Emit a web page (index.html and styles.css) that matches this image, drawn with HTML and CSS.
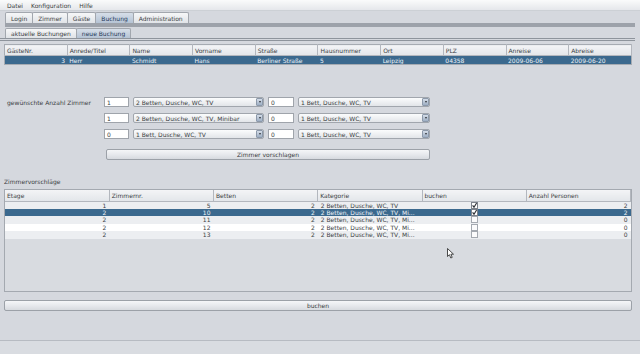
FILE: index.html
```html
<!DOCTYPE html>
<html lang="de">
<head>
    <meta charset="UTF-8">
    <title>Hotelverwaltung</title>
    <link rel="stylesheet" href="styles.css">
</head>
<body>
<div class="window">
    <div class="menubar">
        <span>Datei</span><span>Konfiguration</span><span>Hilfe</span>
    </div>

    <div class="tabs main-tabs">
        <span class="tab">Login</span>
        <span class="tab">Zimmer</span>
        <span class="tab">Gäste</span>
        <span class="tab active">Buchung</span>
        <span class="tab">Administration</span>
    </div>
    <div class="tab-bar"></div>

    <div class="tabs sub-tabs">
        <span class="tab">aktuelle Buchungen</span>
        <span class="tab active">neue Buchung</span>
    </div>
    <div class="sub-line"></div>

    <div class="content">
        <!-- Gast -->
        <table class="grid guest">
            <thead>
                <tr>
                    <th>GästeNr.</th><th>Anrede/Titel</th><th>Name</th><th>Vorname</th><th>Straße</th>
                    <th>Hausnummer</th><th>Ort</th><th>PLZ</th><th>Anreise</th><th>Abreise</th>
                </tr>
            </thead>
            <tbody>
                <tr class="sel">
                    <td class="num">3</td><td>Herr</td><td>Schmidt</td><td>Hans</td><td>Berliner Straße</td>
                    <td>5</td><td>Leipzig</td><td>04358</td><td>2009-06-06</td><td>2009-06-20</td>
                </tr>
            </tbody>
        </table>

        <!-- gewünschte Zimmer -->
        <div class="rooms-form">
            <span class="form-label">gewünschte Anzahl Zimmer</span>
            <span class="field">1</span>
            <span class="combo"><span class="value">2 Betten, Dusche, WC, TV</span><span class="arrow"></span></span>
            <span class="field">0</span>
            <span class="combo"><span class="value">1 Bett, Dusche, WC, TV</span><span class="arrow"></span></span>

            <span></span>
            <span class="field">1</span>
            <span class="combo"><span class="value">2 Betten, Dusche, WC, TV, Minibar</span><span class="arrow"></span></span>
            <span class="field">0</span>
            <span class="combo"><span class="value">1 Bett, Dusche, WC, TV</span><span class="arrow"></span></span>

            <span></span>
            <span class="field">0</span>
            <span class="combo"><span class="value">1 Bett, Dusche, WC, TV</span><span class="arrow"></span></span>
            <span class="field">0</span>
            <span class="combo"><span class="value">1 Bett, Dusche, WC, TV</span><span class="arrow"></span></span>

            <button class="btn suggest">Zimmer vorschlagen</button>
        </div>

        <div class="section-label">Zimmervorschläge</div>
        <div class="scrollpane">
            <table class="grid suggestions">
                <thead>
                    <tr>
                        <th>Etage</th><th>Zimmernr.</th><th>Betten</th><th>Kategorie</th><th>buchen</th><th>Anzahl Personen</th>
                    </tr>
                </thead>
                <tbody>
                    <tr>
                        <td class="num">1</td><td class="num">5</td><td class="num">2</td>
                        <td>2 Betten, Dusche, WC, TV</td>
                        <td class="check"><svg width="7" height="7" viewBox="0 0 7 7"><rect x="0.5" y="0.5" width="6" height="6" fill="#fff" stroke="#7d838c"/><path d="M1.6 3.4 L3 5.2 L5.6 1" fill="none" stroke="#2a2d33" stroke-width="1.1"/></svg></td>
                        <td class="num">2</td>
                    </tr>
                    <tr class="sel">
                        <td class="num">2</td><td class="num">10</td><td class="num">2</td>
                        <td>2 Betten, Dusche, WC, TV, Mi...</td>
                        <td class="check"><svg width="7" height="7" viewBox="0 0 7 7"><rect x="0.5" y="0.5" width="6" height="6" fill="#fff" stroke="#7d838c"/><path d="M1.6 3.4 L3 5.2 L5.6 1" fill="none" stroke="#2a2d33" stroke-width="1.1"/></svg></td>
                        <td class="num">2</td>
                    </tr>
                    <tr>
                        <td class="num">2</td><td class="num">11</td><td class="num">2</td>
                        <td>2 Betten, Dusche, WC, TV, Mi...</td>
                        <td class="check"><svg width="7" height="7" viewBox="0 0 7 7"><rect x="0.5" y="0.5" width="6" height="6" fill="#fbfbfc" stroke="#a4a9b0"/></svg></td>
                        <td class="num">0</td>
                    </tr>
                    <tr>
                        <td class="num">2</td><td class="num">12</td><td class="num">2</td>
                        <td>2 Betten, Dusche, WC, TV, Mi...</td>
                        <td class="check"><svg width="7" height="7" viewBox="0 0 7 7"><rect x="0.5" y="0.5" width="6" height="6" fill="#fbfbfc" stroke="#a4a9b0"/></svg></td>
                        <td class="num">0</td>
                    </tr>
                    <tr>
                        <td class="num">2</td><td class="num">13</td><td class="num">2</td>
                        <td>2 Betten, Dusche, WC, TV, Mi...</td>
                        <td class="check"><svg width="7" height="7" viewBox="0 0 7 7"><rect x="0.5" y="0.5" width="6" height="6" fill="#fbfbfc" stroke="#a4a9b0"/></svg></td>
                        <td class="num">0</td>
                    </tr>
                </tbody>
            </table>
        </div>

        <button class="btn book">buchen</button>
    </div>

    <div class="statusbar"></div>

    <!-- Mauszeiger -->
    <svg class="cursor" width="8" height="11" viewBox="0 0 8 11">
        <path d="M0.5 0.5 L0.5 8.5 L2.4 6.7 L3.8 10 L5.2 9.4 L3.9 6.2 L6.5 6.2 Z" fill="#fff" stroke="#222" stroke-width="0.8"/>
    </svg>
</div>
</body>
</html>
```

FILE: styles.css
```css
/* Allgemein */
* {
    box-sizing: border-box;
}

body {
    margin: 0;
    font-family: "DejaVu Sans", sans-serif;
    font-size: 6px;
    color: #3b3e43;
    background-color: #d5d8de;
}

.window {
    position: relative;
    width: 640px;
    height: 354px;
    overflow: hidden;
    display: flex;
    flex-direction: column;
    background-color: #d5d8de;
}

/* Menü */
.menubar {
    height: 11px;
    display: flex;
    align-items: center;
    padding-left: 3px;
    background: linear-gradient(#fafbfb, #e5e7eb);
    border-bottom: 1px solid #ccd0d5;
}

.menubar span {
    padding: 0 4px;
}

/* Reiter */
.tabs {
    display: flex;
    padding-left: 5px;
}

.main-tabs {
    margin-top: 1px;
    height: 11px;
}

.sub-tabs {
    margin-top: 1px;
    height: 10px;
}

.tab {
    display: flex;
    align-items: center;
    padding: 0 5px;
    margin-right: -1px;
    border: 1px solid #a2a7ae;
    border-bottom: none;
    border-radius: 2px 2px 0 0;
    background: linear-gradient(#f6f7f8, #e0e3e7);
}

.tab.active {
    background: linear-gradient(#d6dee8, #b5c3d4);
    color: #26395a;
}

.tab-bar {
    height: 4px;
    margin: 0 5px 0 5px;
    background-color: #9da2aa;
}

.sub-line {
    height: 3px;
    margin-right: 5px;
    border-top: 1px solid #8e949c;
    border-bottom: 1px solid #8e949c;
}

/* Inhalt */
.content {
    flex: 1;
    padding: 3px 8px 0 4px;
}

.grid {
    border-collapse: collapse;
    table-layout: fixed;
    width: 628px;
}

.grid th {
    height: 11px;
    padding: 0 2px;
    font-weight: normal;
    text-align: left;
    white-space: nowrap;
    overflow: hidden;
    background: linear-gradient(#f3f4f6, #e3e6ea);
    border-right: 1px solid #b3b7be;
    border-bottom: 1px solid #b3b7be;
}

.grid td {
    padding: 0 2px;
    white-space: nowrap;
    overflow: hidden;
}

.guest {
    border: 1px solid #a6abb2;
}

.guest td {
    height: 9px;
}

.grid tr.sel td {
    background-color: #3b698e;
    color: #eef3f8;
}

.num {
    text-align: right;
}

/* Formular */
.rooms-form {
    display: grid;
    grid-template-columns: 93px 25px 131px 26px 132px;
    grid-auto-rows: 10px;
    column-gap: 4px;
    row-gap: 6px;
    margin: 32px 0 0 3px;
}

.form-label {
    display: flex;
    align-items: center;
    white-space: nowrap;
}

.field {
    display: flex;
    align-items: center;
    padding-left: 2px;
    background-color: #ffffff;
    border: 1px solid #9fa4ab;
}

.combo {
    display: flex;
    align-items: center;
    padding-left: 2px;
    border: 1px solid #a1a6ad;
    border-radius: 2px;
    background: linear-gradient(#fbfcfd, #e2e5e9);
}

.combo .value {
    flex: 1;
    white-space: nowrap;
    overflow: hidden;
}

.combo .arrow {
    width: 7px;
    height: 8px;
    display: flex;
    align-items: center;
    justify-content: center;
    border: 1px solid #8c99aa;
    border-radius: 1px;
    background: linear-gradient(#d5dde8, #9daec3);
}

.combo .arrow::after {
    content: "";
    border-left: 1.5px solid transparent;
    border-right: 1.5px solid transparent;
    border-top: 2px solid #2c3036;
}

.btn {
    height: 11px;
    padding: 0;
    font: inherit;
    color: #3a3d42;
    border: 1px solid #9ca1a8;
    border-radius: 2px;
    background: linear-gradient(#f5f6f8 0%, #e7e9ed 50%, #d7dadf 100%);
}

.suggest {
    grid-column: 2 / 6;
    height: 11px;
    margin: 4px 0 0 2px;
}

/* Zimmervorschläge */
.section-label {
    height: 8px;
    line-height: 8px;
    margin-top: 23px;
}

.scrollpane {
    height: 103px;
    margin-top: 3px;
    border: 1px solid #a4a9b0;
    background-color: #d8dbe0;
}

.suggestions {
    width: 626px;
}

.suggestions td {
    height: 7.5px;
    line-height: 7px;
    padding: 0 3px;
    background-color: #ffffff;
}

.suggestions tbody tr:nth-child(odd) td {
    background-color: #eceef1;
}

.suggestions td.check {
    text-align: center;
    padding: 0;
}

.check svg {
    display: block;
    margin: 0 auto;
}

.book {
    width: 628px;
    margin-top: 8px;
}

/* Statusleiste */
.statusbar {
    height: 14px;
    border-top: 1px solid #b7bbc2;
    background-color: #d9dce1;
}

.cursor {
    position: absolute;
    left: 447px;
    top: 248px;
}
```
